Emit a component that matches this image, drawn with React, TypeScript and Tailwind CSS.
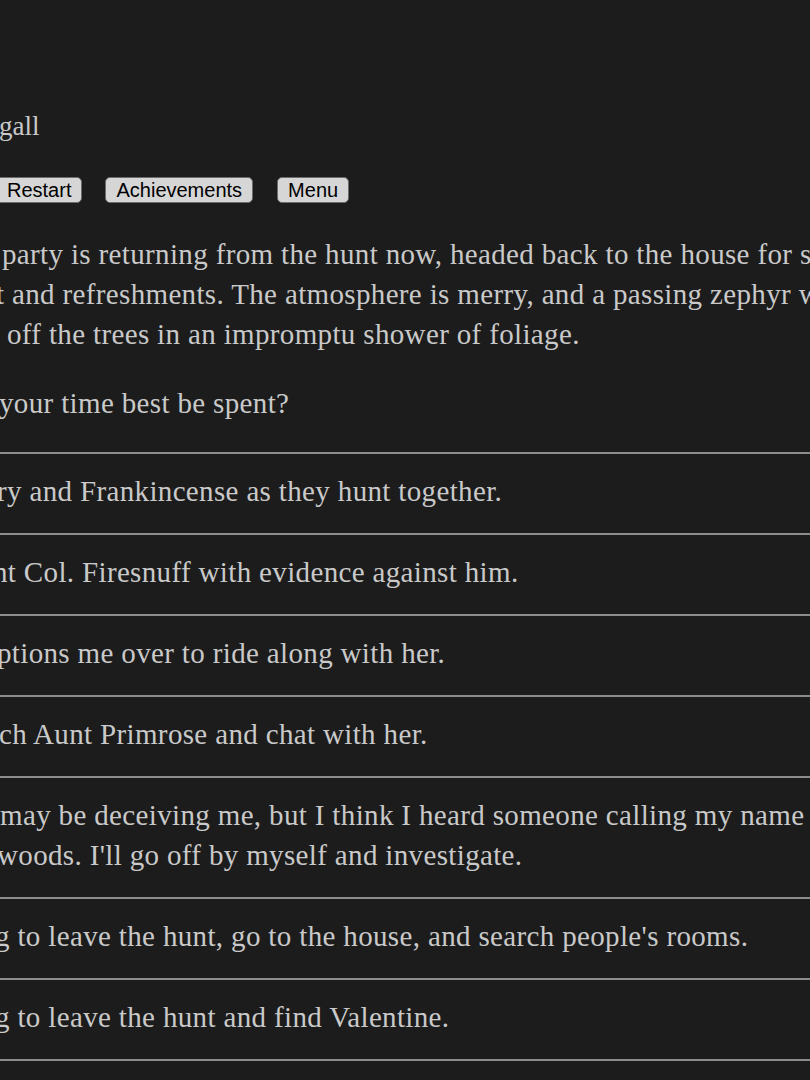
import React from 'react';

const choices: { lines: string[]; shift: string }[] = [
  { lines: ['ry and Frankincense as they hunt together.'], shift: '-ml-[3px]' },
  { lines: ['nt Col. Firesnuff with evidence against him.'], shift: '-ml-[7px]' },
  { lines: ['ptions me over to ride along with her.'], shift: '-ml-[3px]' },
  { lines: ['ch Aunt Primrose and chat with her.'], shift: '-ml-[1px]' },
  {
    lines: ['may be deceiving me, but I think I heard someone calling my name from', 'woods. I\'ll go off by myself and investigate.'],
    shift: 'ml-0',
  },
  { lines: ['g to leave the hunt, go to the house, and search people\'s rooms.'], shift: '-ml-[5px]' },
  { lines: ['g to leave the hunt and find Valentine.'], shift: '-ml-[5px]' },
];

const Button = ({ label, className }: { label: string; className?: string }) => (
  <button
    className={`h-[26px] rounded-[5px] border border-[#6b6b6b] bg-[#d6d6d6] px-[10px] text-[20px] leading-[22px] text-black ${className ?? ''}`}
    style={{ fontFamily: '"Liberation Sans", Arial, sans-serif' }}
  >
    {label}
  </button>
);

const App: React.FC = () => {
  return (
    <div
      className="min-h-screen w-full overflow-hidden bg-[#1c1c1c] text-[#c9c9c9]"
      style={{ fontFamily: '"Liberation Serif", "Times New Roman", serif' }}
    >
      <div className="whitespace-nowrap pt-[106px] tracking-[0.35px]">
        <h1 className="text-[27px] leading-[40px] -ml-[1px] tracking-normal">gall</h1>

        <div className="mt-[31px] flex items-center gap-[23px] tracking-normal">
          <Button label="Restart" className="-ml-[4px]" />
          <Button label="Achievements" />
          <Button label="Menu" className="ml-[1px]" />
        </div>

        <div className="mt-[31px] text-[29px] leading-[40px]">
          <div className="ml-[2px]">party is returning from the hunt now, headed back to the house for some rest</div>
          <div className="-ml-[4px]">t and refreshments. The atmosphere is merry, and a passing zephyr whisks leaves</div>
          <div className="ml-[7px]">off the trees in an impromptu shower of foliage.</div>
        </div>

        <p className="mt-[29px] text-[29px] leading-[40px] -ml-[1px]">your time best be spent?</p>

        <ul className="mt-[29px] text-[29px] leading-[40px]">
          {choices.map((c, i) => (
            <li key={i} className="border-t-2 border-[#8c8c8c] pt-[17px] pb-[22px]">
              {c.lines.map((l, j) => (
                <div key={j} className={j === 0 ? c.shift : '-ml-[3px]'}>
                  {l}
                </div>
              ))}
            </li>
          ))}
          <li className="border-t-2 border-[#8c8c8c] h-[40px]" />
        </ul>
      </div>
    </div>
  );
};

export default App;
